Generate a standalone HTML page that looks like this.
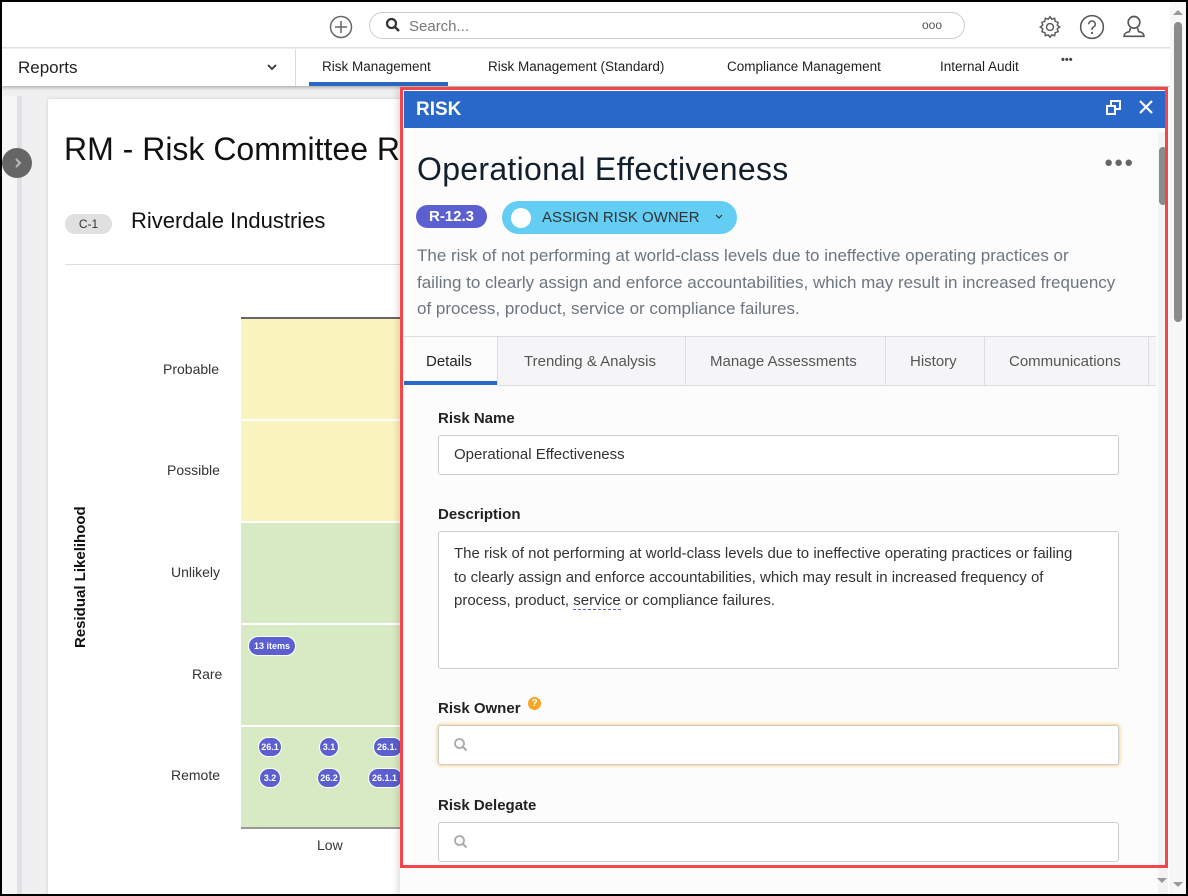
<!DOCTYPE html>
<html><head><meta charset="utf-8"><style>
*{box-sizing:border-box;margin:0;padding:0}
body{width:1188px;height:896px;overflow:hidden;background:#000;font-family:"Liberation Sans",sans-serif;position:relative}
.a{position:absolute}
#app{position:absolute;left:2px;top:2px;width:1184px;height:892px;background:#f0f0f0;overflow:hidden}
.t{color:#333}
.nw{white-space:nowrap}
</style></head><body>
<div id="app">
 <div class="a" style="left:0;top:0;width:1168px;height:46px;background:#fff;border-bottom:1px solid #dfe3e8"></div>
 <svg class="a" style="left:327px;top:13px" width="24" height="24" viewBox="0 0 24 24"><circle cx="12" cy="12" r="10.5" fill="none" stroke="#666" stroke-width="1.5"/><path d="M12 6v12M6 12h12" stroke="#666" stroke-width="1.5"/></svg>
 <div class="a" style="left:367px;top:10px;width:596px;height:27px;border:1px solid #ccc;border-radius:14px;background:#fff"></div>
 <svg class="a" style="left:383px;top:15px" width="16" height="16" viewBox="0 0 16 16"><circle cx="6.5" cy="6.5" r="4.5" fill="none" stroke="#333" stroke-width="2.2"/><path d="M10 10l4 4" stroke="#333" stroke-width="2.4"/></svg>
 <div class="a" style="left:407px;top:16px;font-size:15px;color:#777">Search...</div>
 <div class="a" style="left:920px;top:16px;font-size:12px;color:#555">ooo</div>
 <svg class="a" style="left:1035px;top:12px" width="26" height="26" viewBox="0 0 24 24"><path d="M12 2.5l1.6 2.3 2.7-.8.5 2.8 2.7.9-.8 2.7 2.3 1.6-2.3 1.6.8 2.7-2.7.9-.5 2.8-2.7-.8L12 21.5l-1.6-2.3-2.7.8-.5-2.8-2.7-.9.8-2.7L3 12l2.3-1.6-.8-2.7 2.7-.9.5-2.8 2.7.8z" fill="none" stroke="#555" stroke-width="1.3"/><circle cx="12" cy="12" r="3.2" fill="none" stroke="#555" stroke-width="1.3"/></svg>
 <svg class="a" style="left:1077px;top:12px" width="26" height="26" viewBox="0 0 24 24"><circle cx="12" cy="12" r="10.5" fill="none" stroke="#555" stroke-width="1.4"/><path d="M9 9.5a3 3 0 1 1 4.2 2.7c-.8.4-1.2 1-1.2 1.9v.6" fill="none" stroke="#555" stroke-width="1.4"/><circle cx="12" cy="17.5" r="1" fill="#555"/></svg>
 <svg class="a" style="left:1118px;top:11px" width="28" height="28" viewBox="0 0 24 24"><circle cx="12" cy="8" r="5" fill="none" stroke="#555" stroke-width="1.4"/><path d="M9 13l-1 3c-3 .5-4.5 1.5-4.5 4h17c0-2.5-1.5-3.5-4.5-4l-1-3" fill="none" stroke="#555" stroke-width="1.4"/></svg>
 <div class="a" style="left:0;top:47px;width:1168px;height:37px;background:#fff;box-shadow:0 2px 3px rgba(0,0,0,.25)"></div>
 <div class="a" style="left:16px;top:56px;font-size:17px;color:#222">Reports</div>
 <svg class="a" style="left:264px;top:60px" width="12" height="10" viewBox="0 0 12 10"><path d="M2 3l4 4 4-4" fill="none" stroke="#333" stroke-width="1.8"/></svg>
 <div class="a" style="left:293px;top:47px;width:1px;height:37px;background:#ddd"></div>
 <div class="a nw" style="left:320px;top:57px;font-size:13.5px;color:#222">Risk Management</div>
 <div class="a" style="left:307px;top:80px;width:139px;height:4px;background:#2b68c6"></div>
 <div class="a nw" style="left:486px;top:57px;font-size:13.5px;color:#222">Risk Management (Standard)</div>
 <div class="a nw" style="left:725px;top:57px;font-size:13.5px;color:#222">Compliance Management</div>
 <div class="a nw" style="left:938px;top:57px;font-size:13.5px;color:#222">Internal Audit</div>
 <div class="a" style="left:1059px;top:52px;font-size:11px;color:#444;font-weight:bold">•••</div>
 <div class="a" style="left:0;top:94px;width:15px;height:800px;background:#f6f6f7"></div>
 <div class="a" style="left:15px;top:94px;width:5px;height:800px;background:#dde0e4"></div>
 <div class="a" style="left:0;top:146px;width:30px;height:30px;border-radius:50%;background:#666"></div>
 <svg class="a" style="left:10px;top:154px" width="12" height="14" viewBox="0 0 12 14"><path d="M4 3l4 4-4 4" fill="none" stroke="#bbb" stroke-width="2"/></svg>
 <div class="a" style="left:46px;top:97px;width:380px;height:800px;background:#fff;box-shadow:0 0 3px rgba(0,0,0,.15)"></div>
 <div class="a nw" style="left:62px;top:129px;font-size:32px;color:#111">RM - Risk Committee Re</div>
 <div class="a" style="left:63px;top:212px;width:47px;height:20px;border-radius:10px;background:#e0e0e0;font-size:12px;color:#333;text-align:center;line-height:20px">C-1</div>
 <div class="a nw" style="left:129px;top:206px;font-size:22px;color:#111">Riverdale Industries</div>
 <div class="a" style="left:63px;top:262px;width:340px;height:1px;background:#ddd"></div>
 <div class="a" style="left:239px;top:315px;width:170px;height:2px;background:#666"></div>
 <div class="a" style="left:239px;top:317px;width:170px;height:100px;background:#faf4be"></div>
 <div class="a" style="left:239px;top:419px;width:170px;height:100px;background:#faf4be"></div>
 <div class="a" style="left:239px;top:521px;width:170px;height:100px;background:#d8eac3"></div>
 <div class="a" style="left:239px;top:623px;width:170px;height:100px;background:#d8eac3"></div>
 <div class="a" style="left:239px;top:725px;width:170px;height:100px;background:#d8eac3"></div>
 <div class="a" style="left:239px;top:825px;width:170px;height:2px;background:#999"></div>
 <div class="a t" style="left:161px;top:359px;font-size:14px">Probable</div>
 <div class="a t" style="left:165px;top:460px;font-size:14px">Possible</div>
 <div class="a t" style="left:169px;top:562px;font-size:14px">Unlikely</div>
 <div class="a t" style="left:190px;top:664px;font-size:14px">Rare</div>
 <div class="a t" style="left:169px;top:765px;font-size:14px">Remote</div>
 <div class="a t" style="left:315px;top:835px;font-size:14px">Low</div>
 <div class="a nw" style="font-size:15px;font-weight:bold;color:#111;transform:rotate(-90deg);transform-origin:0 0;left:70px;top:646px">Residual Likelihood</div>
 <div class="a" style="left:246px;top:634px;width:48px;height:20px;border-radius:10px;background:#5b5fcf;border:1px solid #fff;color:#fff;font-size:9px;font-weight:bold;text-align:center;line-height:18px">13 items</div>
 <div class="a" style="left:256px;top:735px;width:24px;height:20px;border-radius:10px;background:#5b5fcf;border:1px solid #fff;color:#fff;font-size:9px;font-weight:bold;text-align:center;line-height:18px">26.1</div>
 <div class="a" style="left:317px;top:735px;width:20px;height:20px;border-radius:10px;background:#5b5fcf;border:1px solid #fff;color:#fff;font-size:9px;font-weight:bold;text-align:center;line-height:18px">3.1</div>
 <div class="a" style="left:371px;top:735px;width:30px;height:20px;border-radius:10px;background:#5b5fcf;border:1px solid #fff;color:#fff;font-size:9px;font-weight:bold;line-height:18px;padding-left:3px;overflow:hidden">26.1.</div>
 <div class="a" style="left:257px;top:766px;width:22px;height:20px;border-radius:10px;background:#5b5fcf;border:1px solid #fff;color:#fff;font-size:9px;font-weight:bold;text-align:center;line-height:18px">3.2</div>
 <div class="a" style="left:315px;top:766px;width:24px;height:20px;border-radius:10px;background:#5b5fcf;border:1px solid #fff;color:#fff;font-size:9px;font-weight:bold;text-align:center;line-height:18px">26.2</div>
 <div class="a" style="left:366px;top:766px;width:35px;height:20px;border-radius:10px;background:#5b5fcf;border:1px solid #fff;color:#fff;font-size:9px;font-weight:bold;line-height:18px;padding-left:3px;overflow:hidden">26.1.1</div>
 <div class="a" style="left:1168px;top:0;width:16px;height:892px;background:#f7f7f7"></div>
 <div class="a" style="left:1172px;top:20px;width:8px;height:300px;border-radius:4px;background:#8a8a8a"></div>
 <div class="a" style="left:1171px;top:8px;width:0;height:0;border-left:5px solid transparent;border-right:5px solid transparent;border-bottom:5px solid #999"></div>
 <div class="a" style="left:1171px;top:880px;width:0;height:0;border-left:5px solid transparent;border-right:5px solid transparent;border-top:5px solid #999"></div>
 <div class="a" style="left:398px;top:85px;width:770px;height:810px;background:#fcfcfc;box-shadow:-3px 0 6px rgba(0,0,0,.12)"></div>
 <div class="a" style="left:1156px;top:130px;width:10px;height:765px;background:#f3f3f3"></div>
 <div class="a" style="left:1157px;top:145px;width:8px;height:58px;border-radius:4px;background:#8a8a8a"></div>
 <div class="a" style="left:1155px;top:876px;width:0;height:0;border-left:5px solid transparent;border-right:5px solid transparent;border-top:5px solid #999"></div>
 <div class="a" style="left:402px;top:89px;width:762px;height:37px;background:#2968c8"></div>
 <div class="a" style="left:414px;top:97px;font-size:19px;font-weight:bold;color:#fff">RISK</div>
 <svg class="a" style="left:1103px;top:97px" width="18" height="18" viewBox="0 0 18 18"><rect x="6" y="2" width="9" height="8" fill="none" stroke="#fff" stroke-width="2"/><rect x="2" y="7" width="8" height="8" fill="#2968c8" stroke="#fff" stroke-width="2"/></svg>
 <svg class="a" style="left:1135px;top:96px" width="18" height="18" viewBox="0 0 18 18"><path d="M3 3l12 12M15 3L3 15" stroke="#fff" stroke-width="2.2"/></svg>
 <div class="a nw" style="left:415px;top:149px;font-size:32px;color:#12202e;letter-spacing:0.3px">Operational Effectiveness</div>
 <div class="a" style="left:1102px;top:152px;font-size:15px;color:#666;letter-spacing:1px">●●●</div>
 <div class="a" style="left:414px;top:203px;width:71px;height:23px;border-radius:12px;background:#5b5fcf;color:#fff;font-size:15px;font-weight:bold;text-align:center;line-height:23px">R-12.3</div>
 <div class="a" style="left:500px;top:199px;width:235px;height:33px;border-radius:17px;background:#63cdf3"></div>
 <div class="a" style="left:509px;top:206px;width:20px;height:20px;border-radius:50%;background:#fff"></div>
 <div class="a nw" style="left:540px;top:207px;font-size:15px;color:#333">ASSIGN RISK OWNER</div>
 <svg class="a" style="left:712px;top:211px" width="10" height="8" viewBox="0 0 10 8"><path d="M2 2l3 3 3-3" fill="none" stroke="#333" stroke-width="1.2"/></svg>
 <div class="a nw" style="left:415px;top:241px;font-size:17px;line-height:26.5px;color:#6c7680">The risk of not performing at world-class levels due to ineffective operating practices or<br>failing to clearly assign and enforce accountabilities, which may result in increased frequency<br>of process, product, service or compliance failures.</div>
 <div class="a" style="left:402px;top:334px;width:752px;height:50px;background:#f5f5f7;border-top:1px solid #ddd;border-bottom:1px solid #ddd"></div>
 <div class="a" style="left:402px;top:335px;width:94px;height:49px;background:#fcfcfc"></div>
 <div class="a" style="left:402px;top:379px;width:94px;height:4px;background:#2968c8"></div>
 <div class="a" style="left:495px;top:335px;width:1px;height:48px;background:#ddd"></div>
 <div class="a" style="left:683px;top:335px;width:1px;height:48px;background:#ddd"></div>
 <div class="a" style="left:883px;top:335px;width:1px;height:48px;background:#ddd"></div>
 <div class="a" style="left:982px;top:335px;width:1px;height:48px;background:#ddd"></div>
 <div class="a" style="left:1146px;top:335px;width:1px;height:48px;background:#ddd"></div>
 <div class="a" style="left:424px;top:351px;font-size:15px;color:#222">Details</div>
 <div class="a nw" style="left:522px;top:351px;font-size:15px;color:#555">Trending &amp; Analysis</div>
 <div class="a nw" style="left:708px;top:351px;font-size:15px;color:#555">Manage Assessments</div>
 <div class="a" style="left:908px;top:351px;font-size:15px;color:#555">History</div>
 <div class="a" style="left:1007px;top:351px;font-size:15px;color:#555">Communications</div>
 <div class="a" style="left:436px;top:408px;font-size:15px;font-weight:bold;color:#222">Risk Name</div>
 <div class="a" style="left:436px;top:433px;width:681px;height:40px;border:1px solid #ccc;border-radius:3px;background:#fff;font-size:15px;color:#333;padding:10px 15px">Operational Effectiveness</div>
 <div class="a" style="left:436px;top:504px;font-size:15px;font-weight:bold;color:#222">Description</div>
 <div class="a nw" style="left:436px;top:529px;width:681px;height:138px;border:1px solid #ccc;border-radius:3px;background:#fff;font-size:15px;color:#333;padding:10px 15px;line-height:23.5px;overflow:hidden">The risk of not performing at world-class levels due to ineffective operating practices or failing<br>to clearly assign and enforce accountabilities, which may result in increased frequency of<br>process, product, <span style="border-bottom:1px dashed #5b5fcf">service</span> or compliance failures.</div>
 <div class="a" style="left:436px;top:698px;font-size:15px;font-weight:bold;color:#222">Risk Owner</div>
 <div class="a" style="left:526px;top:695px;width:13px;height:13px;border-radius:50%;background:#f5a623;color:#fff;font-size:10px;font-weight:bold;text-align:center;line-height:13px">?</div>
 <div class="a" style="left:436px;top:723px;width:681px;height:40px;border:1px solid #ccc;border-radius:3px;background:#fff;box-shadow:0 0 3px 1px #fcd38a"></div>
 <svg class="a" style="left:451px;top:735px" width="16" height="16" viewBox="0 0 16 16"><circle cx="6.5" cy="6.5" r="4.5" fill="none" stroke="#aaa" stroke-width="1.8"/><path d="M10 10l3.5 3.5" stroke="#aaa" stroke-width="2"/></svg>
 <div class="a" style="left:436px;top:795px;font-size:15px;font-weight:bold;color:#222">Risk Delegate</div>
 <div class="a" style="left:436px;top:820px;width:681px;height:40px;border:1px solid #ccc;border-radius:3px;background:#fff"></div>
 <svg class="a" style="left:451px;top:832px" width="16" height="16" viewBox="0 0 16 16"><circle cx="6.5" cy="6.5" r="4.5" fill="none" stroke="#aaa" stroke-width="1.8"/><path d="M10 10l3.5 3.5" stroke="#aaa" stroke-width="2"/></svg>
 <div class="a" style="left:398px;top:85px;width:768px;height:781px;border:3px solid #f5454a"></div>
</div>
</body></html>
